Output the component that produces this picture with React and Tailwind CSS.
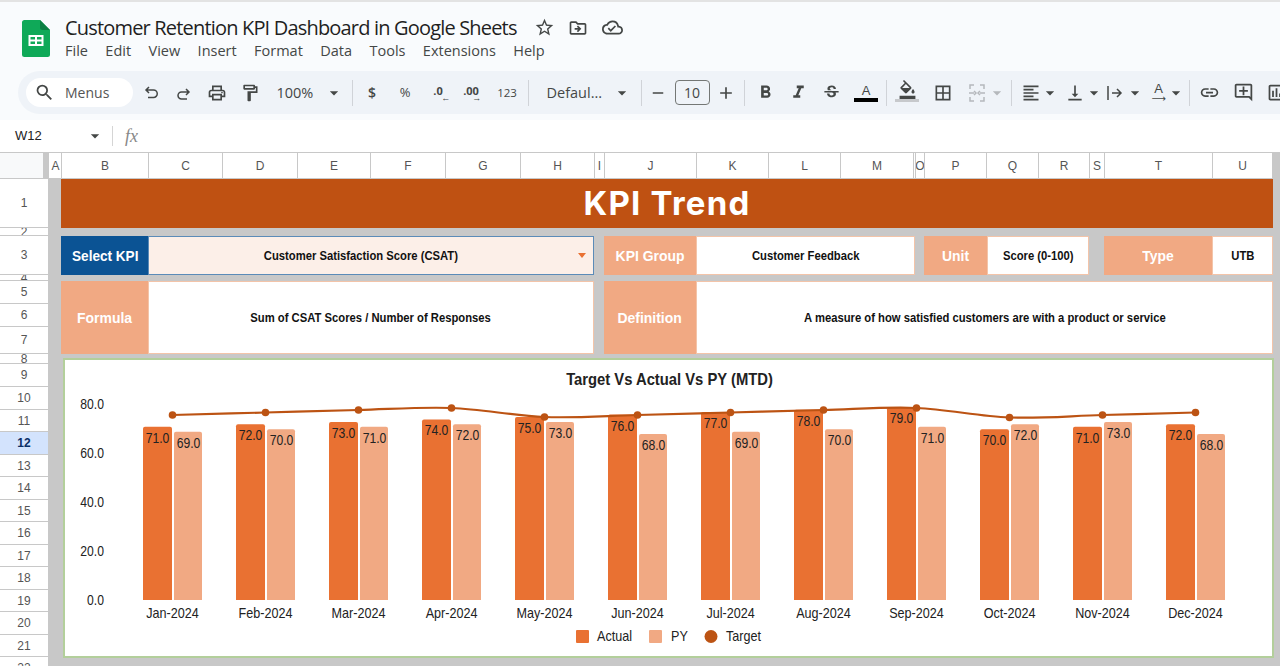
import React from "react";
import {
  MdSearch, MdOutlineLocalPrintshop, MdOutlineFormatPaint, MdStarBorder,
  MdOutlineDriveFileMove, MdOutlineCloudDone, MdArrowDropDown, MdRemove, MdAdd, MdFormatBold,
  MdFormatItalic, MdStrikethroughS, MdFormatColorFill, MdBorderAll, MdFormatAlignLeft,
  MdVerticalAlignBottom, MdLink, MdOutlineAddComment, MdOutlineInsertChart,
} from "react-icons/md";

const menus = ["File", "Edit", "View", "Insert", "Format", "Data", "Tools", "Extensions", "Help"];

const columns = [
  ["A", "w-[12px]"], ["B", "w-[87px]"], ["C", "w-[74px]"], ["D", "w-[75px]"], ["E", "w-[73px]"],
  ["F", "w-[75px]"], ["G", "w-[75px]"], ["H", "w-[74px]"], ["I", "w-[10px]"], ["J", "w-[92px]"],
  ["K", "w-[72px]"], ["L", "w-[72px]"], ["M", "w-[73px]"], ["", "w-[2px]"], ["O", "w-[9px]"],
  ["P", "w-[62px]"], ["Q", "w-[52px]"], ["R", "w-[51px]"], ["S", "w-[15px]"], ["T", "w-[108px]"],
  ["U", "w-[60px]"],
];

const rows = [
  ["1", "h-[49px]"], ["2", "h-[8px]"], ["3", "h-[39px]"], ["4", "h-[6px]"], ["5", "h-[23px]"],
  ["6", "h-[23px]"], ["7", "h-[27px]"], ["8", "h-[10px]"], ["9", "h-[23px]"], ["10", "h-[23px]"],
  ["11", "h-[22px]"], ["12", "h-[23px]"], ["13", "h-[22px]"], ["14", "h-[23px]"], ["15", "h-[22px]"],
  ["16", "h-[23px]"], ["17", "h-[22px]"], ["18", "h-[23px]"], ["19", "h-[22px]"], ["20", "h-[23px]"],
  ["21", "h-[22px]"], ["22", "h-[23px]"],
];

const months = ["Jan", "Feb", "Mar", "Apr", "May", "Jun", "Jul", "Aug", "Sep", "Oct", "Nov", "Dec"];
const actual = [71, 72, 73, 74, 75, 76, 77, 78, 79, 70, 71, 72];
const py = [69, 70, 71, 72, 73, 68, 69, 70, 71, 72, 73, 68];
const target = [415, 412.5, 410, 408, 417, 415, 412.5, 410, 408, 417.5, 415, 412.5];

const cx = (i) => 172.5 + i * 93;
const vy = (v) => 600 - v * 2.44;

function linePath() {
  const pts = target.map((y, i) => [cx(i), y]);
  let d = `M${pts[0][0]} ${pts[0][1]}`;
  for (let i = 0; i < pts.length - 1; i++) {
    const a = pts[Math.max(i - 1, 0)];
    const b = pts[i];
    const c = pts[i + 1];
    const e = pts[Math.min(i + 2, pts.length - 1)];
    d += ` C${b[0] + (c[0] - a[0]) / 6} ${b[1] + (c[1] - a[1]) / 6} ${c[0] - (e[0] - b[0]) / 6} ${c[1] - (e[1] - b[1]) / 6} ${c[0]} ${c[1]}`;
  }
  return d;
}

function Label({ x, y, anchor = "middle", size = 14, sx = 0.87, weight, children }) {
  return (
    <text
      transform={`translate(${x} ${y}) scale(${sx} 1)`}
      textAnchor={anchor}
      fontSize={size}
      fontWeight={weight}
      fill="#222"
      fontFamily="'Liberation Sans', sans-serif"
    >
      {children}
    </text>
  );
}

function Chart() {
  return (
    <svg width="1207" height="296" viewBox="65 360 1207 296" className="block">
      <Label x={669.5} y={385} size={17} weight="700">Target Vs Actual Vs PY (MTD)</Label>
      {[80, 60, 40, 20, 0].map((v, i) => (
        <Label key={v} x={104} y={409 + i * 49} anchor="end">{v.toFixed(1)}</Label>
      ))}
      {months.map((m, i) => (
        <g key={m}>
          <path
            d={`M${cx(i) - 29.5} 600 V${vy(actual[i]) + 2} q0 -2 2 -2 H${cx(i) - 2.5} q2 0 2 2 V600 Z`}
            fill="#e97132"
          />
          <path
            d={`M${cx(i) + 1.5} 600 V${vy(py[i]) + 2} q0 -2 2 -2 H${cx(i) + 27.5} q2 0 2 2 V600 Z`}
            fill="#f1a983"
          />
          <Label x={cx(i) - 15} y={vy(actual[i]) + 16}>{actual[i].toFixed(1)}</Label>
          <Label x={cx(i) + 16} y={vy(py[i]) + 16}>{py[i].toFixed(1)}</Label>
          <Label x={cx(i)} y={618} sx={0.9}>{`${m}-2024`}</Label>
        </g>
      ))}
      <path d={linePath()} fill="none" stroke="#bc5313" strokeWidth="2.2" />
      {target.map((y, i) => (
        <circle key={i} cx={cx(i)} cy={y} r="3.8" fill="#bc5313" />
      ))}
      <rect x="576" y="630" width="13" height="13" rx="1" fill="#e97132" />
      <Label x={597} y={641} anchor="start" sx={0.9}>Actual</Label>
      <rect x="649" y="630" width="13" height="13" rx="1" fill="#f1a983" />
      <Label x={671} y={641} anchor="start" sx={0.9}>PY</Label>
      <circle cx="711" cy="636.5" r="6.5" fill="#bc5313" />
      <Label x={726} y={641} anchor="start" sx={0.9}>Target</Label>
    </svg>
  );
}

function Btn({ children, className = "" }) {
  return (
    <div className={`w-[33px] h-[29px] shrink-0 flex items-center justify-center text-[#444746] ${className}`}>
      {children}
    </div>
  );
}

function Caret({ className = "" }) {
  return <MdArrowDropDown size={20} className={`shrink-0 text-[#444746] ${className}`} />;
}

function Sep({ className = "" }) {
  return <div className={`w-px h-[26px] bg-[#d0d3d8] shrink-0 ${className}`} />;
}

function Toolbar() {
  return (
    <div className="ml-[18px] h-[43px] rounded-l-[22px] bg-[#eff3f8] flex items-center pl-[8px] overflow-hidden font-['Open_Sans',sans-serif]">
      <div className="w-[107px] h-[29px] shrink-0 rounded-full bg-white flex items-center pl-[8px] text-[#555]">
        <MdSearch size={21} className="text-[#444746]" />
        <span className="ml-[10px] text-[14px]">Menus</span>
      </div>
      <div className="w-[1.5px] shrink-0" />
      <Btn>
        <svg width="18" height="18" viewBox="0 0 18 18" fill="none" stroke="currentColor" strokeWidth="1.5">
          <path d="M7 3 4 6l3 3M4 6h7.500a3.500 3.500 0 0 1 0 7.500H6" />
        </svg>
      </Btn>
      <Btn>
        <svg width="18" height="18" viewBox="0 0 18 18" fill="none" stroke="currentColor" strokeWidth="1.5">
          <path d="m11 5 3 3-3 3M14 8H6.500a3.500 3.500 0 0 0 0 7H12" />
        </svg>
      </Btn>
      <Btn><MdOutlineLocalPrintshop size={20} /></Btn>
      <Btn><MdOutlineFormatPaint size={20} /></Btn>
      <span className="ml-[10px] w-[47px] shrink-0 text-[14.5px] text-[#444746]">100%</span>
      <Caret />
      <Sep className="ml-[8px]" />
      <div className="w-[3px] shrink-0" />
      <Btn><span className="text-[14px] font-semibold">$</span></Btn>
      <Btn><span className="text-[13px]">%</span></Btn>
      <Btn>
        <div className="relative text-[11px] font-bold leading-none pb-[5px]">
          .0
          <span className="absolute left-[8px] top-[8px] text-[9px]">←</span>
        </div>
      </Btn>
      <Btn>
        <div className="relative text-[11px] font-bold leading-none pb-[5px]">
          .00
          <span className="absolute left-[9px] top-[8px] text-[9px]">→</span>
        </div>
      </Btn>
      <Btn className="ml-[3px]"><span className="text-[11.5px]">123</span></Btn>
      <Sep className="ml-[4px]" />
      <span className="ml-[18px] w-[65px] shrink-0 text-[14.5px] text-[#444746]">Defaul...</span>
      <Caret />
      <Sep className="ml-[9px]" />
      <Btn><MdRemove size={18} /></Btn>
      <div className="w-[35px] h-[25px] shrink-0 border border-[#747775] rounded-[4px] flex items-center justify-center text-[14px] text-[#444746]">10</div>
      <Btn><MdAdd size={20} /></Btn>
      <Sep className="ml-[1px]" />
      <Btn className="ml-[4px]"><MdFormatBold size={21} /></Btn>
      <Btn><MdFormatItalic size={21} /></Btn>
      <Btn><MdStrikethroughS size={19} /></Btn>
      <Btn className="ml-[2px]">
        <div className="flex flex-col items-center">
          <span className="text-[13px] leading-[15px] font-['Liberation_Sans',sans-serif]">A</span>
          <div className="w-[24px] h-[3.5px] bg-black" />
        </div>
      </Btn>
      <Sep className="ml-[3px]" />
      <Btn className="ml-[4px]">
        <div className="flex flex-col items-center">
          <MdFormatColorFill size={19} className="-mt-[3px]" />
          <div className="w-[24px] h-[3.5px] bg-[#c7c9cc]" />
        </div>
      </Btn>
      <Btn className="ml-[3px]"><MdBorderAll size={20} /></Btn>
      <Btn className="ml-[1px] text-[#b5b8bc]">
        <svg width="18" height="18" viewBox="0 0 18 18" fill="none" stroke="currentColor" strokeWidth="1.5">
          <path d="M6 1H2v4M2 13v4h4M12 1h4v4M16 13v4h-4M1 9h5M6 7l2 2-2 2M17 9h-5M12 7l-2 2 2 2" />
        </svg>
      </Btn>
      <Caret className="-ml-[7px] text-[#b5b8bc]" />
      <Sep className="ml-[4px]" />
      <div className="w-[2px] shrink-0" />
      <MdFormatAlignLeft size={20} className="text-[#444746] ml-[7px] shrink-0" />
      <Caret className="-ml-[1px]" />
      <MdVerticalAlignBottom size={20} className="text-[#444746] ml-[5px] shrink-0" />
      <Caret className="-ml-[1px]" />
      <svg width="18" height="18" viewBox="0 0 18 18" fill="none" stroke="#444746" strokeWidth="1.5" className="shrink-0 ml-[2px]">
        <path d="M2 2v14M6 9h9M11 5l4 4-4 4" />
      </svg>
      <Caret className="ml-[1px]" />
      <div className="ml-[7px] flex flex-col items-center shrink-0 text-[#444746]">
        <span className="text-[13px] leading-[13px] font-['Liberation_Sans',sans-serif]">A</span>
        <span className="text-[10px] leading-[8px] font-['DejaVu_Sans',sans-serif]">⟶</span>
      </div>
      <Caret className="ml-[0px]" />
      <Sep className="ml-[3px]" />
      <Btn className="ml-[3px]"><MdLink size={21} /></Btn>
      <Btn className="ml-[1px]"><MdOutlineAddComment size={21} /></Btn>
      <Btn><MdOutlineInsertChart size={21} /></Btn>
    </div>
  );
}

function Peach({ className = "", children }) {
  return (
    <div className={`bg-[#f1a983] text-white font-bold text-[15px] pt-[1px] flex items-center justify-center shrink-0 ${className}`}>
      <span className="scale-x-[0.93] whitespace-nowrap">{children}</span>
    </div>
  );
}

function Value({ className = "", children }) {
  return (
    <div className={`bg-white border border-[#f3c4a9] text-[12.5px] pt-[1px] font-bold text-[#111] flex items-center justify-center shrink-0 ${className}`}>
      <span className="scale-x-90 whitespace-nowrap">{children}</span>
    </div>
  );
}

export default function App() {
  return (
    <div className="w-[1280px] h-[666px] overflow-hidden bg-white flex flex-col font-['Liberation_Sans',sans-serif]">
      <div className="h-[2px] bg-[#e3e3e3] shrink-0" />

      {/* title and menus */}
      <div className="h-[118px] shrink-0 bg-[#f9fbfd] flex flex-col">
        <div className="h-[69px] shrink-0 flex">
          <svg width="28" height="37" viewBox="0 0 28 37" className="ml-[22px] mt-[18px] shrink-0">
            <path d="M2.5 0H18l10 10v24.5a2.5 2.5 0 0 1-2.5 2.5h-23A2.5 2.5 0 0 1 0 34.5v-32A2.5 2.5 0 0 1 2.5 0Z" fill="#0fa958" />
            <path d="M18 0l10 10h-7.5A2.5 2.5 0 0 1 18 7.5Z" fill="#0b7f42" />
            <path d="M6.5 15h15v11h-15Zm2 2v2.5h4.5V17Zm6.500 0v2.500h4.500V17Zm-6.500 4.500V24h4.500v-2.500Zm6.500 0V24h4.500v-2.500Z" fill="#fff" fillRule="evenodd" />
          </svg>
          <div className="ml-[15px] flex flex-col">
            <div className="flex items-center h-[25px] mt-[13px]">
              <span className="text-[20px] leading-[25px] text-[#1f1f1f] w-[452px] whitespace-nowrap font-['Open_Sans',sans-serif] tracking-[-0.82px]">
                Customer Retention KPI Dashboard in Google Sheets
              </span>
              <MdStarBorder size={21} className="ml-[17px] text-[#444746]" />
              <MdOutlineDriveFileMove size={20} className="ml-[13px] text-[#444746]" />
              <MdOutlineCloudDone size={21} className="ml-[14px] text-[#444746]" />
            </div>
            <div className="flex gap-[17.4px] h-[22px] items-center text-[14.5px] text-[#444746] font-['Open_Sans',sans-serif]">
              {menus.map((m) => (
                <span key={m}>{m}</span>
              ))}
            </div>
          </div>
        </div>
        <Toolbar />
      </div>

      {/* formula bar */}
      <div className="h-[33px] shrink-0 bg-white flex items-center text-[#444746] border-b border-[#c8c8c8]">
        <span className="ml-[15px] w-[70px] text-[13px] text-[#222]">W12</span>
        <Caret />
        <div className="ml-[7px] w-px h-[20px] bg-[#d5d5d5]" />
        <span className="ml-[12px] text-[18px] italic text-[#888] font-['Liberation_Serif',serif]">fx</span>
      </div>

      {/* column letters */}
      <div className="h-[25px] shrink-0 flex bg-white text-[12px] text-[#555]">
        <div className="w-[43px] shrink-0 bg-[#f8f9fa]" />
        <div className="w-[6px] shrink-0 bg-[#c8c8c8]" />
        <div className="w-px shrink-0" />
        {columns.map(([c, w], i) => (
          <div key={i} className={`${w} shrink-0 border-r border-[#c8c8c8] flex items-center justify-center overflow-hidden`}>
            {c}
          </div>
        ))}
        <div className="flex-1 bg-[#c8c8c8]" />
      </div>

      <div className="flex-1 min-h-0 flex">
        {/* row numbers */}
        <div className="w-[48px] shrink-0 flex flex-col bg-white text-[12px] text-[#555]">
          <div className="h-px shrink-0 bg-[#c8c8c8]" />
          {rows.map(([r, h]) => (
            <div
              key={r}
              className={`${h} shrink-0 border-b border-[#c8c8c8] flex items-center justify-center overflow-hidden ${
                r === "12" ? "bg-[#d3e3fd] font-bold text-[#0b2f66]" : ""
              }`}
            >
              {r}
            </div>
          ))}
        </div>

        {/* dashboard */}
        <div className="flex-1 bg-[#c8c8c8] pl-[13px] pt-[1px] flex flex-col overflow-hidden">
          <div className="w-[1212px] h-[49px] shrink-0 bg-[#bf5112] text-white font-['Inter',sans-serif] font-bold text-[33px] tracking-[1.2px] pt-[1px] flex items-center justify-center">
            KPI Trend
          </div>

          <div className="flex mt-[8px] h-[39px] shrink-0">
            <div className="w-[87px] shrink-0 bg-[#0b5394] text-white font-bold text-[14px] pt-[1px] pl-[1px] flex items-center justify-center">
              <span className="scale-x-[0.97] whitespace-nowrap">Select KPI</span>
            </div>
            <div className="w-[446px] shrink-0 relative bg-[#fcefe8] border border-[#5b8bb8] text-[12.5px] pt-[1px] pr-[21px] font-bold text-[#111] flex items-center justify-center">
              <span className="scale-x-90 whitespace-nowrap">Customer Satisfaction Score (CSAT)</span>
              <div className="absolute right-[7px] top-[16px] w-0 h-0 border-l-[4px] border-r-[4px] border-t-[5px] border-l-transparent border-r-transparent border-t-[#e97132]" />
            </div>
            <Peach className="w-[92px] ml-[10px]">KPI Group</Peach>
            <Value className="w-[219px]">Customer Feedback</Value>
            <Peach className="w-[63px] ml-[9px]">Unit</Peach>
            <Value className="w-[102px]">Score (0-100)</Value>
            <Peach className="w-[108px] ml-[15px]">Type</Peach>
            <Value className="w-[61px]">UTB</Value>
          </div>

          <div className="flex mt-[6px] h-[73px] shrink-0">
            <Peach className="w-[87px]">Formula</Peach>
            <Value className="w-[446px]">Sum of CSAT Scores / Number of Responses</Value>
            <Peach className="w-[92px] ml-[10px]">Definition</Peach>
            <Value className="w-[577px]">A measure of how satisfied customers are with a product or service</Value>
          </div>

          <div className="ml-[2px] mt-[4px] w-[1211px] h-[300px] shrink-0 bg-white border-2 border-[#b3cf9b]">
            <Chart />
          </div>
        </div>
      </div>
    </div>
  );
}
